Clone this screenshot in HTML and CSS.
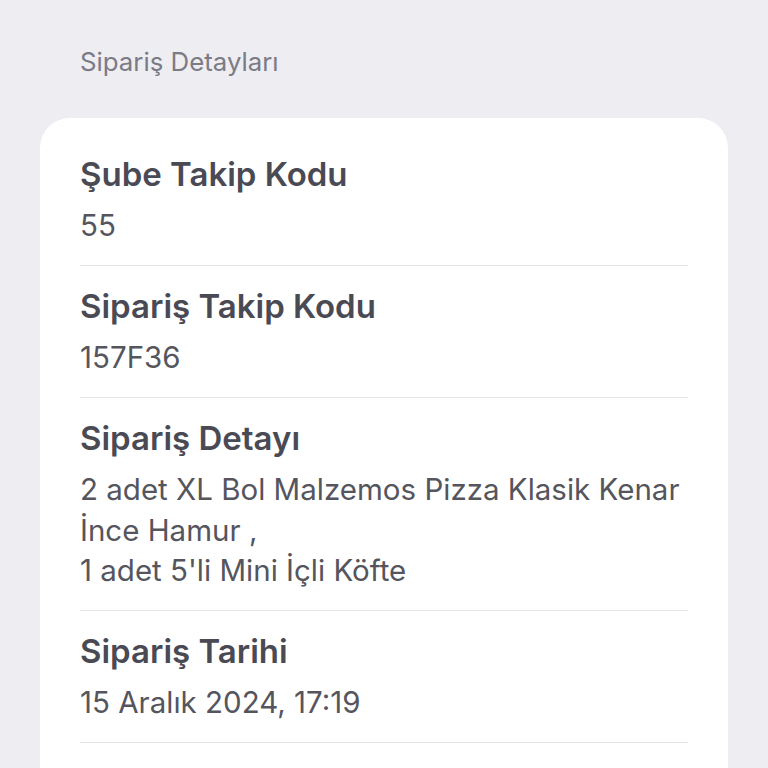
FILE: index.html
```html
<!DOCTYPE html>
<html lang="tr">
<head>
    <meta charset="UTF-8">
    <meta name="viewport" content="width=device-width, initial-scale=1.0">
    <title>Sipariş Detayları</title>
    <link rel="stylesheet" href="styles.css">
</head>
<body>
    <div class="page">
        <h2 class="section-title">Sipariş Detayları</h2>

        <!-- Order details card -->
        <div class="card">
            <div class="row">
                <div class="label">Şube Takip Kodu</div>
                <div class="value">55</div>
            </div>
            <div class="row">
                <div class="label">Sipariş Takip Kodu</div>
                <div class="value">157F36</div>
            </div>
            <div class="row">
                <div class="label">Sipariş Detayı</div>
                <div class="value">2 adet XL Bol Malzemos Pizza Klasik Kenar İnce Hamur ,<br>1 adet 5'li Mini İçli Köfte</div>
            </div>
            <div class="row">
                <div class="label">Sipariş Tarihi</div>
                <div class="value">15 Aralık 2024, 17:19</div>
            </div>
        </div>
    </div>
</body>
</html>
```

FILE: styles.css
```css
body {
    font-family: Inter, "Open Sans", sans-serif;
    margin: 0;
    padding: 0;
    background-color: #ededf2;
}
.page {
    padding: 0 40px;
}
.section-title {
    margin: 0;
    padding: 47px 40px 41px;
    font-size: 25.8px;
    font-weight: normal;
    line-height: 30px;
    color: #7b7b85;
}
.card {
    background-color: #ffffff;
    border-radius: 30px 30px 0 0;
    padding: 16px 40px 0;
    min-height: 640px;
}
.row {
    padding: 18px 0 19.5px;
    border-bottom: 1px solid #e4e4e9;
}
.label {
    font-size: 33px;
    font-weight: 600;
    line-height: 44px;
    color: #4a4a54;
    margin-bottom: 9px;
}
.value {
    font-size: 29.5px;
    line-height: 40.5px;
    color: #55555e;
}
```
